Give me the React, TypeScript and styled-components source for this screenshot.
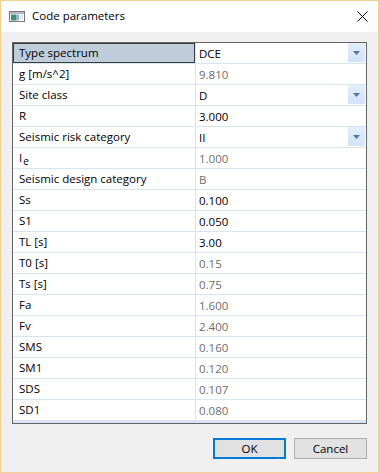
import React from "react";
import styled, { createGlobalStyle } from "styled-components";

const Global = createGlobalStyle`
  html, body { margin: 0; padding: 0; background: #f0f0f0; }
  body { font-family: "Open Sans", "Noto Sans", sans-serif; }
`;

const Window = styled.div`
  width: 379px;
  height: 473px;
  box-sizing: border-box;
  border: 1px solid #efd08e;
  background: #f0f0f0;
  display: flex;
  flex-direction: column;
`;

const TitleBar = styled.div`
  height: 31px;
  background: #ffffff;
  display: flex;
  align-items: center;
  padding: 0 10px 0 8px;
  flex-shrink: 0;
`;

const TitleText = styled.div`
  font-size: 11.5px;
  color: #000;
  margin-left: 7px;
  flex: 1;
  line-height: 1;
  padding-bottom: 1px;
`;

const Body = styled.div`
  flex: 1;
  display: flex;
  flex-direction: column;
  padding: 10px 11px 13px 11px;
`;

const Grid = styled.div`
  border: 1px solid #646464;
  background: #d7e4f2;
  height: 380px;
  display: flex;
  flex-direction: column;
  gap: 1px;
`;

const Row = styled.div`
  display: grid;
  grid-template-columns: 182px 1fr;
  column-gap: 1px;
  height: 20px;
`;

const LabelCell = styled.div<{ $selected?: boolean }>`
  background: ${(p) => (p.$selected ? "#bfcddb" : "#ffffff")};
  box-shadow: ${(p) => (p.$selected ? "inset 0 0 0 1px #3c3c3c" : "none")};
  font-size: 11.5px;
  color: #000;
  display: flex;
  align-items: center;
  padding-left: 6px;
  white-space: nowrap;
`;

const LabelText = styled.span`
  line-height: 16px;
`;

const ValueCell = styled.div<{ $readonly?: boolean }>`
  background: #ffffff;
  font-size: 11.5px;
  color: ${(p) => (p.$readonly ? "#6d6d6d" : "#000")};
  display: flex;
  align-items: center;
  padding-left: 3px;
`;

const ValueText = styled.span`
  flex: 1;
`;

const DropButton = styled.div`
  width: 17px;
  height: 19px;
  margin-right: 1px;
  align-self: flex-start;
  background: linear-gradient(#e4eefb, #d2e2f8);
  display: flex;
  align-items: center;
  justify-content: center;
`;

const Sub = styled.span`
  font-size: 10px;
  position: relative;
  top: 3px;
  margin-left: 1px;
`;

const Footer = styled.div`
  display: flex;
  justify-content: flex-end;
  gap: 8px;
  margin-top: 14px;
`;

const Button = styled.button<{ $default?: boolean }>`
  width: 73px;
  height: 21px;
  box-sizing: border-box;
  background: #e1e1e1;
  border: ${(p) => (p.$default ? "2px solid #0078d7" : "1px solid #adadad")};
  font-family: "Open Sans", "Noto Sans", sans-serif;
  font-size: 11.5px;
  color: #000;
  padding: 0;
  line-height: 1;
`;

type Item = {
  label: React.ReactNode;
  value: string;
  readonly?: boolean;
  drop?: boolean;
  selected?: boolean;
};

const items: Item[] = [
  { label: "Type spectrum", value: "DCE", drop: true, selected: true },
  { label: "g [m/s^2]", value: "9.810", readonly: true },
  { label: "Site class", value: "D", drop: true },
  { label: "R", value: "3.000" },
  { label: "Seismic risk category", value: "II", drop: true },
  { label: <>I<Sub>e</Sub></>, value: "1.000", readonly: true },
  { label: "Seismic design category", value: "B", readonly: true },
  { label: "Ss", value: "0.100" },
  { label: "S1", value: "0.050" },
  { label: "TL [s]", value: "3.00" },
  { label: "T0 [s]", value: "0.15", readonly: true },
  { label: "Ts [s]", value: "0.75", readonly: true },
  { label: "Fa", value: "1.600", readonly: true },
  { label: "Fv", value: "2.400", readonly: true },
  { label: "SMS", value: "0.160", readonly: true },
  { label: "SM1", value: "0.120", readonly: true },
  { label: "SDS", value: "0.107", readonly: true },
  { label: "SD1", value: "0.080", readonly: true },
];

const AppIcon = () => (
  <svg width="16" height="11" viewBox="0 0 16 11">
    <rect x="0.5" y="0.5" width="15" height="10" fill="#ffffff" stroke="#7a7a7a" />
    <rect x="1" y="1" width="14" height="2" fill="#b9b9b9" />
    <rect x="2" y="3.5" width="5" height="6" fill="#3f8f7a" />
    <rect x="7" y="3.5" width="3" height="6" fill="#8fb7c9" />
    <rect x="11" y="3.5" width="3" height="6" fill="#e8e8e8" />
  </svg>
);

const CloseIcon = () => (
  <svg width="11" height="11" viewBox="0 0 11 11">
    <path d="M0.5 0.5 L10.5 10.5 M10.5 0.5 L0.5 10.5" stroke="#000" strokeWidth="1" />
  </svg>
);

const Arrow = () => (
  <svg width="7" height="4" viewBox="0 0 7 4">
    <path d="M0 0 H7 L3.5 4 Z" fill="#5676a0" />
  </svg>
);

export default function App() {
  return (
    <>
      <Global />
      <Window>
        <TitleBar>
          <AppIcon />
          <TitleText>Code parameters</TitleText>
          <CloseIcon />
        </TitleBar>
        <Body>
          <Grid>
            {items.map((it, i) => (
              <Row key={i}>
                <LabelCell $selected={it.selected}>
                  <LabelText>{it.label}</LabelText>
                </LabelCell>
                <ValueCell $readonly={it.readonly}>
                  <ValueText>{it.value}</ValueText>
                  {it.drop && (
                    <DropButton>
                      <Arrow />
                    </DropButton>
                  )}
                </ValueCell>
              </Row>
            ))}
          </Grid>
          <Footer>
            <Button $default>OK</Button>
            <Button>Cancel</Button>
          </Footer>
        </Body>
      </Window>
    </>
  );
}
